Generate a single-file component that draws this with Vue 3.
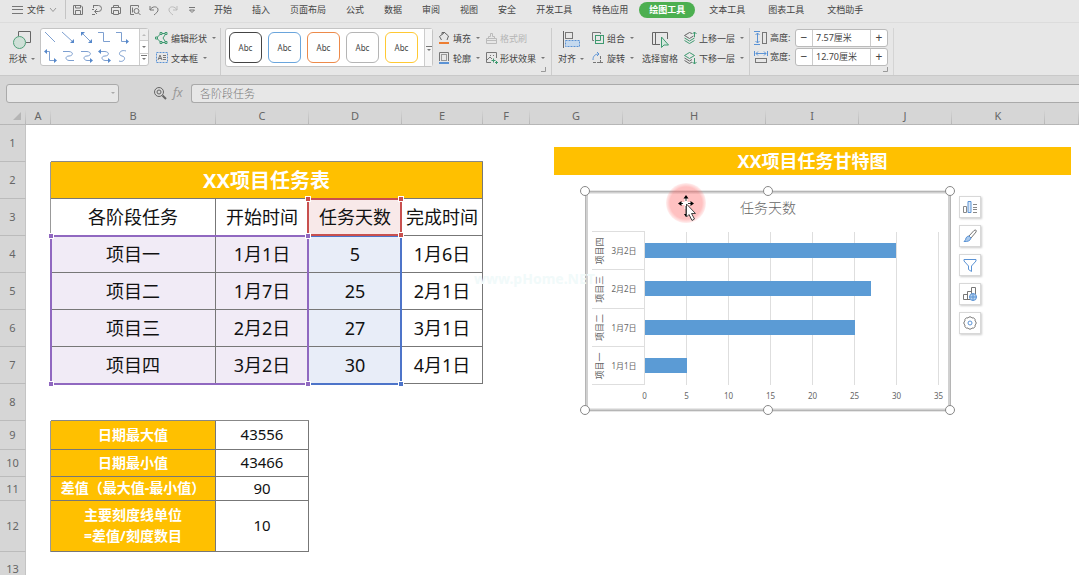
<script setup>
import { ref } from 'vue'

const tabsBefore = ['开始', '插入', '页面布局', '公式', '数据', '审阅', '视图', '安全', '开发工具', '特色应用']
const tabsAfter = ['文本工具', '图表工具', '文档助手']
const columns = ['A', 'B', 'C', 'D', 'E', 'F', 'G', 'H', 'I', 'J', 'K', '']
const styleColors = ['dark', 'azure', 'orange', 'gray', 'gold']

const tasks = [
  { row: 4, name: '项目一', start: '1月1日', days: 5, end: '1月6日' },
  { row: 5, name: '项目二', start: '1月7日', days: 25, end: '2月1日' },
  { row: 6, name: '项目三', start: '2月2日', days: 27, end: '3月1日' },
  { row: 7, name: '项目四', start: '3月2日', days: 30, end: '4月1日' },
]
const calc = [
  { row: 9, label: ['日期最大值'], value: 43556 },
  { row: 10, label: ['日期最小值'], value: 43466 },
  { row: 11, label: ['差值（最大值-最小值）'], value: 90 },
  { row: 12, label: ['主要刻度线单位', '=差值/刻度数目'], value: 10 },
]

const name = ref('')
const formula = ref('各阶段任务')
const shapeHeight = ref('7.57厘米')
const shapeWidth = ref('12.70厘米')

const bars = [...tasks].reverse()
const ticks = [0, 5, 10, 15, 20, 25, 30, 35]
const tickX = (value) => Math.round(59 + value * 8.4) + 0.5
</script>

<template>
  <main class="app">
    <nav class="tabs">
      <button class="file">
        <svg width="11" height="10" viewBox="0 0 11 10"><path d="M0 1.500H11M0 4.500H11M0 8.500H11" stroke="#777" fill="none" /></svg>
        <span>文件</span>
        <svg width="8" height="6" viewBox="0 0 8 6"><path d="M1 1L4 4.500L7 1" stroke="#999" fill="none" /></svg>
      </button>
      <div class="quick">
        <button aria-label="保存">
          <svg width="12" height="12" viewBox="0 0 12 12"><path d="M1.500 1.500H9L10.500 3V10.500H1.500ZM3.500 1.500V4H8.500V1.500M3.500 10.500V6.500H8.500V10.500" /></svg>
        </button>
        <button aria-label="输出为PDF">
          <svg width="12" height="12" viewBox="0 0 12 12"><path d="M2 1.500H7.500A2.500 2.500 0 0 1 7.500 7.500H4M2.500 1.500V4M1 5.500H3M6 5L3.500 7.500L6 10M1 10.500H4" /></svg>
        </button>
        <button aria-label="打印">
          <svg width="12" height="12" viewBox="0 0 12 12"><path d="M3.500 3.500V1.500H8.500V3.500M3.500 9.500H1.500V3.500H10.500V9.500H8.500M3.500 6.500H8.500V10.500H3.500Z" /></svg>
        </button>
        <button aria-label="打印预览">
          <svg width="12" height="12" viewBox="0 0 12 12"><path d="M5 10.500H1.500V1.500H9.500V3.500M3.500 3.500V8.500M9.500 9L11.500 11" /><circle cx="7.500" cy="7" r="2.500" /></svg>
        </button>
        <button aria-label="撤销">
          <svg width="12" height="12" viewBox="0 0 12 12"><path d="M2 2V6H6M2 6C4 2 9 2 10 5C10.500 8 8 9 6 11" /></svg>
        </button>
        <button aria-label="恢复" class="faint">
          <svg width="12" height="12" viewBox="0 0 12 12"><path d="M10 2V6H6M10 6C8 2 3 2 2 5C1.500 8 4 9 6 11" /></svg>
        </button>
        <button aria-label="更多">
          <svg width="12" height="12" viewBox="0 0 12 12"><path d="M3 3.500H9M3.500 6L6 8.500L8.500 6Z" /></svg>
        </button>
      </div>
      <div class="menu">
        <button v-for="tab in tabsBefore" :key="tab">{{ tab }}</button>
        <button class="active">绘图工具</button>
        <button v-for="tab in tabsAfter" :key="tab">{{ tab }}</button>
      </div>
    </nav>

    <section class="ribbon">
      <button class="big shape">
        <svg width="20" height="20" viewBox="0 0 20 20">
          <path d="M6.500 6V1.500H18.500V12.500H14" stroke="#666" fill="none" />
          <circle cx="7.500" cy="12.500" r="6" stroke="#4f9f78" fill="#cfe0d7" />
        </svg>
        <span>形状<i class="caret"></i></span>
      </button>
      <div class="gallery lines">
        <svg width="98" height="36" viewBox="0 0 98 36" fill="none" stroke="#7d9fd0">
          <path d="M4 3L14 13M21 3L32 13M41 4L50 13M57 3.500H62.500V12.500H69M75 3.500H80.500V12.500H86" />
          <path d="M4 22.500H8.500V31.500H14M22 22.500H28C33 23 32 27 28 27C24 27 24 31 28 31.500H33M40 22.500H46C51 23 50 27 46 27C42 27 42 31 46 31.500H50M58 22.500H64C69 23 68 27 64 27C60 27 60 31 64 31.500H68" />
          <path d="M85 22C79 20 76 26 81 27C86 28 83 34 78 32" />
          <path fill="#5688cb" stroke="none" d="M33 14V10L29 14ZM51 14V10L47 14ZM40 3V7L44 3ZM88 12.500L85 10V15ZM3 22.500L6 20V25ZM16 31.500L13 29V34ZM52 31.500L49 29V34ZM70 31.500L67 29V34ZM57 22.500L60 20V25Z" />
        </svg>
        <div class="scroll">
          <button aria-label="上一行" class="dim"><i class="caret up"></i></button>
          <button aria-label="下一行"><i class="caret"></i></button>
          <button aria-label="更多形状"><i class="caret lined"></i></button>
        </div>
      </div>
      <div class="stack edit">
        <button>
          <svg width="14" height="14" viewBox="0 0 14 14" fill="none" stroke="#3f9a70"><path d="M6 2.500L1.500 7L6 11.500H11L8 7L11 2.500Z" /><path d="M5 1.500H7V3.500H5ZM5 10.500H7V12.500H5ZM10 1.500H12V3.500H10ZM10 10.500H12V12.500H10ZM.5 6H2.500V8H.5Z" fill="#e7e7e7" /></svg>
          <span>编辑形状</span><i class="caret"></i>
        </button>
        <button>
          <svg width="14" height="14" viewBox="0 0 14 14" fill="none"><rect x="1.500" y="1.500" width="11" height="10" stroke="#5b93d5" stroke-dasharray="2 1" /><path d="M3 9L5 4L7 9M3.500 7.500H6.500M8 4.500H11M8 6.500H11M8 8.500H11" stroke="#777" /></svg>
          <span>文本框</span><i class="caret"></i>
        </button>
      </div>
      <div class="gallery styles">
        <button v-for="color in styleColors" :key="color" class="style" :class="color">Abc</button>
        <button class="more" aria-label="更多样式"><i class="caret lined"></i></button>
      </div>
      <div class="stack paint">
        <button>
          <svg width="13" height="14" viewBox="0 0 13 14" fill="none"><path d="M3.500 9L1.500 5.500L6.500 1.500L10.500 5L9 9M4 3.500V1.500H7" stroke="#666" /><path d="M1 12H11" stroke="#ed7d31" stroke-width="2" /></svg>
          <span>填充</span><i class="caret"></i>
        </button>
        <button>
          <svg width="13" height="14" viewBox="0 0 13 14" fill="none"><path d="M1.500 10V1.500H10.500V10" stroke="#777" /><rect x="3.500" y="3.500" width="5" height="6" stroke="#999" /><path d="M1 12H11" stroke="#5b93d5" stroke-width="2" /></svg>
          <span>轮廓</span><i class="caret"></i>
        </button>
      </div>
      <div class="stack effect">
        <button class="disabled" disabled>
          <svg width="13" height="14" viewBox="0 0 13 14" fill="none" stroke="#bbb"><path d="M1.500 7.500H11.500V12.500H1.500ZM1.500 9.500H11.500M3.500 7.500V5.500H5.500V2.500H7.500V5.500H9.500V7.500" /></svg>
          <span>格式刷</span>
        </button>
        <button>
          <svg width="13" height="14" viewBox="0 0 13 14" fill="none"><path d="M6 11.500H1.500V1.500H11.500V7M2 9L5 6L7 8M5 4.500H6M8 4.500H9" stroke="#777" /><path d="M8.500 7.500V11.500M6.500 9.500H10.500M11.500 10V13M10 11.500H13" stroke="#3f9a70" /></svg>
          <span>形状效果</span><i class="caret"></i>
        </button>
        <button class="launcher" aria-label="设置形状格式"><svg width="5" height="5" viewBox="0 0 5 5"><path d="M4.500 0V4.500H0" stroke="#999" fill="none" /></svg></button>
      </div>
      <button class="big align">
        <svg width="18" height="20" viewBox="0 0 18 20" fill="none"><path d="M1.500 1V18" stroke="#666" /><rect x="3.500" y="2.500" width="7" height="6" stroke="#777" /><rect x="3.500" y="10.500" width="14" height="6" stroke="#5b93d5" fill="#c5d9ee" stroke-dasharray="2 1" /></svg>
        <span>对齐<i class="caret"></i></span>
      </button>
      <div class="stack arrange">
        <button>
          <svg width="14" height="14" viewBox="0 0 14 14" fill="none"><path d="M3 9.500H1.500V1.500H9.500V3" stroke="#777" /><rect x="4.500" y="4.500" width="8" height="8" stroke="#3f9a70" /><path d="M9.500 4.500V9.500H4.500" stroke="#3f9a70" /></svg>
          <span>组合</span><i class="caret"></i>
        </button>
        <button>
          <svg width="14" height="14" viewBox="0 0 14 14" fill="none"><path d="M2 9C2 5 4 3 8 3M6 1L8 3L6 5" stroke="#5b93d5" /><path d="M2 11.500H12M9.500 5V13" stroke="#777" stroke-dasharray="3 1" /></svg>
          <span>旋转</span><i class="caret"></i>
        </button>
      </div>
      <button class="big pane">
        <svg width="20" height="20" viewBox="0 0 20 20" fill="none"><path d="M10 14.500H2.500V2.500H17.500V9M5.500 2.500V14.500" stroke="#666" /><path d="M11.500 7V17.500L14 15H18.500Z" stroke="#3f9a70" fill="#d3e8dd" /></svg>
        <span>选择窗格</span>
      </button>
      <div class="stack layer">
        <button>
          <svg width="14" height="14" viewBox="0 0 14 14" fill="none"><path d="M9 2.500L6.500 1.500L1.500 4.500L6.500 7.500L10.500 5" stroke="#666" /><path d="M1.500 7L6.500 10L11.500 7M1.500 9.500L6.500 12.500L11.500 9.500M11.500 6V1M9.500 3L11.500 1L13.500 3" stroke="#3f9a70" /></svg>
          <span>上移一层</span><i class="caret"></i>
        </button>
        <button>
          <svg width="14" height="14" viewBox="0 0 14 14" fill="none"><path d="M1.500 4.500L6.500 1.500L11.500 4.500L6.500 7.500Z" stroke="#3f9a70" /><path d="M1.500 7L6.500 10L9 8.500M1.500 9.500L6.500 12.500L9 11" stroke="#666" /><path d="M11.500 7V13M9.500 11L11.500 13L13.500 11" stroke="#3f9a70" /></svg>
          <span>下移一层</span><i class="caret"></i>
        </button>
      </div>
      <div class="stack size">
        <div class="field">
          <svg width="14" height="14" viewBox="0 0 14 14" fill="none"><path d="M3.500 2V12M1.500 4L3.500 2L5.500 4M1.500 10L3.500 12L5.500 10M0 .5H6M0 13.500H6" stroke="#5b93d5" /><rect x="8.500" y="1.500" width="4" height="11" stroke="#777" /></svg>
          <label for="shape-height">高度:</label>
          <div class="spinner">
            <button aria-label="减小高度">−</button>
            <input id="shape-height" v-model="shapeHeight" />
            <button aria-label="增大高度">+</button>
          </div>
        </div>
        <div class="field">
          <svg width="14" height="14" viewBox="0 0 14 14" fill="none"><path d="M2 3.500H12M4 1.500L2 3.500L4 5.500M10 1.500L12 3.500L10 5.500M.5 1V6M13.500 1V6" stroke="#5b93d5" /><rect x="1.500" y="8.500" width="11" height="4" stroke="#777" /></svg>
          <label for="shape-width">宽度:</label>
          <div class="spinner">
            <button aria-label="减小宽度">−</button>
            <input id="shape-width" v-model="shapeWidth" />
            <button aria-label="增大宽度">+</button>
          </div>
        </div>
        <button class="launcher" aria-label="大小设置"><svg width="5" height="5" viewBox="0 0 5 5"><path d="M4.500 0V4.500H0" stroke="#999" fill="none" /></svg></button>
      </div>
    </section>

    <section class="formula">
      <div class="name-box">
        <input v-model="name" aria-label="名称框" />
        <i class="caret"></i>
      </div>
      <svg class="lens" width="14" height="14" viewBox="0 0 14 14" fill="none" stroke="#666"><circle cx="6" cy="6" r="4.500" /><circle cx="6" cy="6" r="2" /><path d="M9.500 9.500L13 13" stroke-width="2" /></svg>
      <label class="fx" for="formula-input">fx</label>
      <input id="formula-input" v-model="formula" class="formula-input" />
    </section>

    <section class="sheet">
      <table class="grid">
        <colgroup>
          <col class="w-head" /><col class="w-a" /><col class="w-b" /><col class="w-std" /><col class="w-std" /><col class="w-e" />
          <col class="w-f" /><col class="w-std" /><col class="w-h" /><col class="w-std" /><col class="w-std" /><col class="w-std" /><col />
        </colgroup>
        <thead>
          <tr>
            <th class="corner"><svg width="10" height="10" viewBox="0 0 10 10"><path d="M9 1V9H1Z" fill="#b5b5b5" /></svg></th>
            <th v-for="column in columns" :key="column" scope="col">{{ column }}</th>
          </tr>
        </thead>
        <tbody>
          <tr>
            <th scope="row">1</th><td></td><td colspan="4" class="above"></td><td colspan="7"></td>
          </tr>
          <tr>
            <th scope="row">2</th><td class="edge"></td><td colspan="4" class="cell title">XX项目任务表</td><td colspan="7"></td>
          </tr>
          <tr>
            <th scope="row">3</th><td class="edge"></td>
            <td class="cell">各阶段任务</td><td class="cell">开始时间</td><td class="cell red">任务天数</td><td class="cell">完成时间</td><td colspan="7"></td>
          </tr>
          <tr v-for="task in tasks" :key="task.row">
            <th scope="row">{{ task.row }}</th><td class="edge"></td>
            <td class="cell purple">{{ task.name }}</td><td class="cell purple">{{ task.start }}</td><td class="cell blue">{{ task.days }}</td><td class="cell">{{ task.end }}</td>
            <td colspan="7"></td>
          </tr>
          <tr>
            <th scope="row">8</th><td></td><td colspan="2" class="above"></td><td colspan="9"></td>
          </tr>
          <tr v-for="item in calc" :key="item.row" :class="'row-' + item.row">
            <th scope="row">{{ item.row }}</th><td class="edge"></td>
            <td class="cell label"><div v-for="line in item.label" :key="line">{{ line }}</div></td>
            <td class="cell number">{{ item.value }}</td><td colspan="9"></td>
          </tr>
          <tr class="row-13">
            <th scope="row">13</th><td colspan="12"></td>
          </tr>
        </tbody>
      </table>

      <div class="range range-blue"><b class="br"></b></div>
      <div class="range range-red"><b class="tl"></b><b class="tr"></b><b class="br"></b></div>
      <div class="range range-purple"><b class="tl"></b><b class="tr"></b><b class="bl"></b><b class="br"></b></div>

      <h2 class="banner">XX项目任务甘特图</h2>

      <figure class="chart">
        <svg width="380" height="234" viewBox="-7 -7 380 234">
          <rect x="1.500" y="1" width="363" height="218" fill="#fff" stroke="#d0d0d0" stroke-width="3" />
          <path d="M0 .5H366M0 219.500H366M.5 0V220M365.500 0V220" stroke="#b5b5b5" />
          <text class="chart-title" x="183" y="22">任务天数</text>
          <path v-for="tick in ticks" :key="tick" :d="`M${tickX(tick)} 41V194`" stroke="#dedede" />
          <path d="M7 40.500H60M7 78.500H60M7 117.500H60M7 155.500H60M7 193.500H60" stroke="#dedede" />
          <g v-for="(bar, i) in bars" :key="bar.row">
            <rect x="60" :y="Math.round(52 + i * 38.300)" :width="Math.round(bar.days * 8.380)" height="15" fill="#5b9bd5" />
            <text class="axis" x="39" :y="Math.round(63 + i * 38.300)">{{ bar.start }}</text>
            <text class="group" :transform="`translate(18 ${60 + i * 38.300}) rotate(-90)`">{{ bar.name }}</text>
          </g>
          <text v-for="tick in ticks" :key="'t' + tick" class="axis" :x="tickX(tick)" y="208">{{ tick }}</text>
          <g fill="#fff" stroke="#888">
            <circle cx="0" cy="0" r="4.500" /><circle cx="183" cy="0" r="4.500" /><circle cx="365" cy="0" r="4.500" />
            <circle cx="0" cy="219" r="4.500" /><circle cx="183" cy="219" r="4.500" /><circle cx="365" cy="219" r="4.500" />
          </g>
        </svg>
      </figure>

      <div class="watermark">www.pHome.NET</div>

      <div class="chart-tools">
        <button aria-label="图表元素">
          <svg width="16" height="16" viewBox="0 0 16 16" fill="none"><path d="M1.500 7.500H4.500V13.500H1.500Z" stroke="#888" /><path d="M6 2.500H9V13.500H6Z" stroke="#5b93d5" fill="#dce9f7" /><path d="M11 5.500H15M11 8.500H15M11 10.500H15M11 13.500H15" stroke="#888" /></svg>
        </button>
        <button aria-label="图表样式">
          <svg width="16" height="16" viewBox="0 0 16 16" fill="none"><path d="M7 8L12 2.500Q15 1 14 4L9 10" stroke="#777" /><path d="M7 8L9 10Q8 14 2 13.500Q4 12 4 10Q5 8 7 8Z" stroke="#5b93d5" fill="#a9c9ec" /></svg>
        </button>
        <button aria-label="图表筛选器">
          <svg width="16" height="16" viewBox="0 0 16 16" fill="none" stroke="#5b93d5"><path d="M2 2.500H14V4L9.500 9V14.500L6.500 12.500V9L2 4Z" /></svg>
        </button>
        <button aria-label="在线图表">
          <svg width="16" height="16" viewBox="0 0 16 16" fill="none"><path d="M8 13.500H1.500V8.500H5.500V5.500H9.500V1.500H13.500V8M5.500 8V13.500M9.500 5V8" stroke="#777" /><circle cx="11" cy="11" r="3.500" fill="#b9d4ef" stroke="#5b93d5" /><path d="M7.500 11H14.500M11 7.500V14.500" stroke="#5b93d5" /></svg>
        </button>
        <button aria-label="设置">
          <svg width="16" height="16" viewBox="0 0 16 16" fill="none"><path d="M13 10A2.300 2.300 0 0 1 10 13A2.300 2.300 0 0 1 6 13A2.300 2.300 0 0 1 3 10A2.300 2.300 0 0 1 3 6A2.300 2.300 0 0 1 6 3A2.300 2.300 0 0 1 10 3A2.300 2.300 0 0 1 13 6A2.300 2.300 0 0 1 13 10Z" stroke="#777" /><circle cx="8" cy="8" r="2" stroke="#5b93d5" /></svg>
        </button>
      </div>

      <div class="pointer">
        <svg width="40" height="40" viewBox="0 0 40 40">
          <path d="M20 15V26M14 20.500H26" stroke="#fff" stroke-width="3" />
          <path d="M20 15V18M20 23V32M14 20.500H17M22 20.500H26" stroke="#333" />
          <path d="M20 12L22.500 15.500H17.500ZM12 20.500L15.500 18V23ZM28 20.500L24.500 18V23ZM20 34L18 31H22Z" fill="#000" />
          <path d="M20.500 21V34L23 31.500L26 37.500L28.500 36L25.500 30.500H29.500Z" fill="#fff" stroke="#444" />
        </svg>
      </div>
    </section>
  </main>
</template>

<style>
body {
  margin: 0;
}
</style>

<style scoped>
.app {
  display: flex;
  flex-direction: column;
  height: 100vh;
  overflow: hidden;
  background: #d6d6d6;
  color: #444;
  font-family: "Noto Sans", "Noto Sans CJK SC", sans-serif;
  font-size: 9px;
}
button {
  padding: 0;
  border: 0;
  background: none;
  color: inherit;
  font: inherit;
  white-space: nowrap;
}
input {
  min-width: 0;
  padding: 0;
  border: 0;
  outline: 0;
  background: none;
  color: inherit;
  font: inherit;
}
svg {
  display: block;
  flex: none;
}
.caret {
  flex: none;
  display: inline-block;
  border: 2px solid transparent;
  border-top-color: #777;
  border-bottom: 0;
}
.caret.up {
  border-top: 0;
  border-bottom: 2px solid #bbb;
}
.caret.lined {
  position: relative;
}
.caret.lined::before {
  content: "";
  position: absolute;
  top: -5px;
  left: -3px;
  width: 6px;
  height: 1px;
  background: #777;
}

/* tab bar */
.tabs {
  display: flex;
  flex: none;
  height: 23px;
  padding-bottom: 3px;
  border-bottom: 1px solid #dcdcdc;
  background: #e7e7e7;
  box-sizing: border-box;
}
.file {
  display: flex;
  flex: none;
  align-items: center;
  gap: 4px;
  width: 66px;
  padding-left: 12px;
  border-right: 1px solid #c4c4c4;
  box-sizing: border-box;
}
.quick {
  display: flex;
  flex: none;
  align-items: center;
  gap: 7px;
  width: 148px;
  padding-left: 6px;
  box-sizing: border-box;
}
.quick svg {
  fill: none;
  stroke: #777;
}
.quick .faint svg {
  stroke: #bbb;
}
.menu {
  display: flex;
  align-items: center;
  gap: 20px;
  white-space: nowrap;
}
.menu .active {
  height: 16px;
  margin: 0 -6px 0 -9px;
  padding: 0 10px;
  border-radius: 8px;
  background: #4caf50;
  color: #fff;
  font-weight: 700;
}
.menu .active ~ button:not(.active) {
  margin-right: 3px;
}

/* ribbon */
.ribbon {
  display: flex;
  flex: none;
  height: 53px;
  padding-top: 5px;
  border-bottom: 1px solid #c9c9c9;
  background: #e7e7e7;
  box-sizing: border-box;
}
.big {
  display: flex;
  flex: none;
  flex-direction: column;
  align-items: center;
  height: 40px;
  padding-top: 2px;
  box-sizing: border-box;
}
.big span {
  display: flex;
  align-items: center;
  gap: 4px;
  margin-top: 2px;
  line-height: 14px;
}
.shape {
  width: 40px;
  padding-left: 4px;
}
.gallery {
  display: flex;
  flex: none;
  height: 38px;
  border: 1px solid #c4c4c4;
  border-radius: 3px;
  background: #fff;
  box-sizing: border-box;
}
.lines {
  width: 109px;
}
.scroll {
  display: flex;
  flex: 1;
  flex-direction: column;
  border-left: 1px solid #ccc;
}
.scroll button {
  display: flex;
  flex: 1;
  align-items: center;
  justify-content: center;
}
.scroll button + button {
  border-top: 1px solid #ccc;
}
.scroll .dim {
  background: #eee;
}
.stack {
  position: relative;
  display: flex;
  flex: none;
  flex-direction: column;
  box-sizing: border-box;
}
.stack > button {
  display: flex;
  align-items: center;
  height: 20px;
  gap: 2px;
}
.stack .caret {
  margin-left: 3px;
}
.stack > .launcher {
  position: absolute;
  right: 5px;
  bottom: 3px;
  height: 5px;
}
.edit {
  width: 72px;
  height: 47px;
  margin-right: 4px;
  padding-left: 6px;
  border-right: 1px solid #ccc;
}
.styles {
  width: 208px;
  height: 39px;
  align-items: center;
  gap: 6px;
  padding-left: 3px;
}
.style {
  width: 33px;
  height: 31px;
  border: 1px solid;
  border-radius: 6px;
  box-sizing: border-box;
  font-size: 8px;
  flex: none;
}
.style.dark { border-color: #444; }
.style.azure { border-color: #6aa5dc; }
.style.orange { border-color: #ed8a4a; }
.style.gray { border-color: #b5b5b5; }
.style.gold { border-color: #ffc933; }
.more {
  flex: 1;
  align-self: stretch;
  border-left: 1px solid #ccc;
  background: #f6f6f6;
}
.paint {
  width: 46px;
  padding-left: 5px;
}
.effect {
  width: 73px;
  height: 47px;
  padding-left: 6px;
  border-right: 1px solid #ccc;
}
.disabled {
  color: #b5b5b5;
}
.align {
  width: 38px;
}
.arrange {
  width: 47px;
  padding-left: 1px;
}
.pane {
  width: 46px;
}
.layer {
  width: 67px;
  height: 47px;
  border-right: 1px solid #ccc;
}
.size {
  width: 144px;
  height: 47px;
  padding-left: 4px;
  border-right: 1px solid #d4d4d4;
}
.field {
  display: flex;
  align-items: center;
  height: 19px;
}
.field label {
  width: 25px;
  margin-left: 2px;
  white-space: nowrap;
}
.spinner {
  display: flex;
  width: 93px;
  height: 18px;
  border: 1px solid #bbb;
  border-radius: 3px;
  background: #fff;
  box-sizing: border-box;
}
.spinner button {
  width: 16px;
  flex: none;
  font-size: 12px;
  line-height: 14px;
}
.spinner input {
  flex: 1;
  width: 0;
  padding-left: 3px;
  border: solid #ccc;
  border-width: 0 1px;
}

/* formula bar */
.formula {
  display: flex;
  flex: none;
  align-items: center;
  height: 28px;
  padding: 7px 0 1px 6px;
  box-sizing: border-box;
}
.name-box {
  display: flex;
  align-items: center;
  width: 113px;
  height: 19px;
  padding-right: 3px;
  border: 1px solid #aaa;
  border-radius: 3px;
  background: #e7e7e7;
  box-sizing: border-box;
}
.name-box input {
  flex: 1;
}
.name-box .caret {
  border-top-color: #aaa;
}
.lens {
  margin-left: 34px;
}
.fx {
  width: 18px;
  margin-left: 6px;
  color: #999;
  font-size: 12px;
  font-style: italic;
  line-height: 18px;
}
.formula-input {
  flex: 1;
  height: 19px;
  padding-left: 8px;
  border: 1px solid #aaa;
  border-right: 0;
  border-radius: 3px 0 0 3px;
  background: #e7e7e7;
  box-sizing: border-box;
  color: #777;
  font-size: 11px;
  font-weight: 300;
}

/* sheet */
.sheet {
  position: relative;
  flex: 1;
  min-height: 0;
  overflow: hidden;
  background: #fff;
}
.grid {
  width: 100%;
  border-collapse: separate;
  border-spacing: 0;
  table-layout: fixed;
}
.w-head { width: 26px; }
.w-a { width: 25px; }
.w-b { width: 165px; }
.w-std { width: 93px; }
.w-e { width: 81px; }
.w-f { width: 47px; }
.w-h { width: 143px; }
th,
td {
  height: 37px;
  padding: 0;
  box-sizing: border-box;
}
th {
  background: #d6d6d6;
  color: #666;
  font-size: 11px;
  font-weight: 400;
  line-height: 14px;
}
thead th {
  height: 21px;
  padding-top: 4px;
  border-right: 1px solid;
  border-bottom: 1px solid #bbb;
  border-image: linear-gradient(#d6d6d6 30%, #b5b5b5) 1;
}
.corner svg {
  margin-left: 12px;
}
tbody th {
  border-right: 1px solid #c4c4c4;
  border-bottom: 1px solid #bbb;
}
.cell {
  border: solid #777;
  border-width: 0 1px 1px 0;
  color: #111;
  font-size: 18px;
  line-height: 22px;
  text-align: center;
  white-space: nowrap;
}
.edge {
  border-right: 1px solid #999;
}
.above {
  border-bottom: 1px solid #888;
}
.title {
  padding-top: 2px;
  background: #ffc000;
  color: #fff;
  font-size: 20px;
  font-weight: 700;
}
.red { background: #f8e9e9; }
.purple { background: #f1ebf6; }
.blue { background: #e8edf8; }
.label {
  padding-bottom: 2px;
  background: #ffc000;
  color: #fff;
  font-size: 14px;
  font-weight: 700;
  line-height: 21px;
}
.number {
  padding-bottom: 2px;
  font-size: 15px;
  line-height: 20px;
}
.row-9 > * { height: 29px; }
.row-10 > * { height: 27px; }
.row-11 > * { height: 24px; }
.row-12 > * { height: 51px; }
.row-13 > * {
  height: 34px;
  line-height: 10px;
}

/* highlighted ranges */
.range {
  position: absolute;
  border: 2px solid;
  box-sizing: border-box;
}
.range-purple {
  top: 131px;
  left: 50px;
  width: 259px;
  height: 150px;
  border-color: #9068c0;
}
.range-red {
  top: 94px;
  left: 307px;
  width: 95px;
  height: 38px;
  border-color: #c8504f;
}
.range-blue {
  top: 131px;
  left: 307px;
  width: 95px;
  height: 150px;
  border-color: #4d74c9;
}
.range b {
  position: absolute;
  width: 4px;
  height: 4px;
  border: 1px solid #fff;
}
.range-purple b { background: #9068c0; }
.range-red b { background: #c8504f; }
.range-blue b { background: #4d74c9; }
.tl { top: -4px; left: -4px; }
.tr { top: -4px; right: -4px; }
.bl { bottom: -4px; left: -4px; }
.br { right: -4px; bottom: -4px; }

/* floating objects */
.banner {
  position: absolute;
  top: 43px;
  left: 554px;
  width: 517px;
  margin: 0;
  background: #ffc000;
  color: #fff;
  font-size: 18px;
  line-height: 28px;
  text-align: center;
}
.chart {
  position: absolute;
  top: 80px;
  left: 578px;
  margin: 0;
}
.chart text {
  fill: #666;
  font-size: 8px;
  text-anchor: middle;
}
.chart .chart-title {
  font-size: 14px;
  font-weight: 300;
}
.chart .group {
  font-size: 9px;
}
.watermark {
  position: absolute;
  top: 165px;
  left: 474px;
  color: #f1fafa;
  font-size: 14px;
  font-weight: 700;
  line-height: 20px;
}
.chart-tools {
  position: absolute;
  top: 92px;
  left: 959px;
  display: flex;
  flex-direction: column;
  gap: 7px;
}
.chart-tools button {
  padding: 2px;
  border: 1px solid #d8d8d8;
  background: #fff;
  box-shadow: 1px 1px 2px #ccc;
}
.pointer {
  position: absolute;
  top: 79px;
  left: 666px;
  border-radius: 50%;
  background: radial-gradient(circle closest-side, rgba(255, 100, 100, 0.4) 80%, rgba(255, 100, 100, 0.1));
}
</style>
